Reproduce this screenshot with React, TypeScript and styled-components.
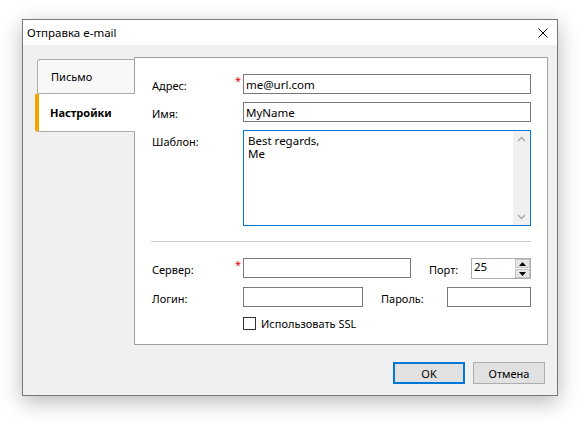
import styled, { createGlobalStyle } from "styled-components";

const GlobalStyle = createGlobalStyle`
  html, body {
    margin: 0;
    background: #fff;
  }
  body {
    min-height: 434px;
    font-family: "Noto Sans", "Open Sans", sans-serif;
    font-size: 11px;
    color: #000;
  }
`;

const ChevronIcon = ({ up }: { up?: boolean }) => (
  <svg width="17" height="17" viewBox="0 0 17 17">
    <polyline
      points={up ? "5,10 8.5,6.5 12,10" : "5,7 8.5,10.5 12,7"}
      fill="none"
      stroke="#a6a6a6"
      strokeWidth="1.4"
    />
  </svg>
);

const Triangle = ({ up }: { up?: boolean }) => (
  <svg width="7" height="4" viewBox="0 0 7 4">
    <polygon points={up ? "0,4 3.5,0 7,4" : "0,0 3.5,4 7,0"} fill="#000" />
  </svg>
);

const App = () => {
  return (
    <>
      <GlobalStyle />
      <Dialog>
        <TitleBar>
          <Title>Отправка e-mail</Title>
          <CloseButton>
            <svg width="10" height="10" viewBox="0 0 10 10">
              <path d="M0.5 0.5 L9.5 9.5 M9.5 0.5 L0.5 9.5" stroke="#000" strokeWidth="1" />
            </svg>
          </CloseButton>
        </TitleBar>

        <DialogBody>
          <Main>
            <TabList>
              <Tab>Письмо</Tab>
              <Tab $active>Настройки</Tab>
            </TabList>

            <Panel>
              <FormGrid>
                <Label>Адрес:</Label>
                <Required>*</Required>
                <Input readOnly value="me@url.com" />

                <Label>Имя:</Label>
                <span />
                <Input readOnly value="MyName" />

                <Label>Шаблон:</Label>
                <span />
                <TextArea>
                  <TextBody>{"Best regards,\nMe"}</TextBody>
                  <ScrollBar>
                    <ChevronIcon up />
                    <ChevronIcon />
                  </ScrollBar>
                </TextArea>
              </FormGrid>

              <Separator />

              <Row>
                <RowLabel>Сервер:</RowLabel>
                <RowRequired>*</RowRequired>
                <Input readOnly value="" $width={168} />
                <SideLabel>Порт:</SideLabel>
                <SpinBox>
                  <SpinValue>25</SpinValue>
                  <SpinButtons>
                    <SpinButton>
                      <Triangle up />
                    </SpinButton>
                    <SpinButton>
                      <Triangle />
                    </SpinButton>
                  </SpinButtons>
                </SpinBox>
              </Row>

              <Row>
                <RowLabel>Логин:</RowLabel>
                <RowRequired />
                <Input readOnly value="" $width={120} />
                <SideLabel>Пароль:</SideLabel>
                <Input readOnly value="" $width={84} />
              </Row>

              <CheckRow>
                <CheckBox />
                <span>Использовать SSL</span>
              </CheckRow>
            </Panel>
          </Main>

          <Footer>
            <Button $primary>OK</Button>
            <Button>Отмена</Button>
          </Footer>
        </DialogBody>
      </Dialog>
    </>
  );
};

export default App;

const Dialog = styled.div`
  margin: 19px 0 0 22px;
  width: 536px;
  height: 377px;
  box-sizing: border-box;
  border: 1px solid #777;
  box-shadow: 0 6px 20px rgba(0, 0, 0, 0.28);
  display: flex;
  flex-direction: column;
  background: #f0f0f0;
`;

const TitleBar = styled.div`
  height: 25px;
  flex-shrink: 0;
  background: #fff;
  display: flex;
  align-items: center;
  justify-content: space-between;
  padding-left: 4px;
`;

const Title = styled.span`
  font-size: 11.5px;
`;

const CloseButton = styled.div`
  width: 10px;
  height: 10px;
  margin-right: 9px;
  display: flex;
`;

const DialogBody = styled.div`
  flex: 1;
  padding: 12px 9px 11px 12px;
  display: flex;
  flex-direction: column;
`;

const Main = styled.div`
  display: flex;
  height: 288px;
  flex-shrink: 0;
`;

const TabList = styled.div`
  width: 99px;
  padding-top: 2px;
  display: flex;
  flex-direction: column;
`;

const Tab = styled.div<{ $active?: boolean }>`
  box-sizing: border-box;
  display: flex;
  align-items: center;
  position: relative;
  border: 1px solid #adadad;
  border-right: none;
  ${({ $active }) =>
    $active
      ? `
    height: 39px;
    margin-right: -1px;
    z-index: 1;
    background: #fff;
    border-left: 4px solid #f5a300;
    border-radius: 3px 0 0 3px;
    padding-left: 11px;
    font-weight: bold;
  `
      : `
    height: 34px;
    margin-left: 2px;
    background: #f8f8f8;
    border-bottom: none;
    border-radius: 3px 0 0 0;
    padding-left: 13px;
  `}
`;

const Panel = styled.div`
  flex: 1;
  background: #fff;
  border: 1px solid #a0a0a0;
  padding: 16px 16px 16px 17px;
  display: flex;
  flex-direction: column;
`;

const FormGrid = styled.div`
  display: grid;
  grid-template-columns: 83px 8px 288px;
  align-items: start;
  row-gap: 8px;
`;

const Label = styled.div`
  height: 20px;
  line-height: 18px;
  padding-top: 3px;
  box-sizing: border-box;
`;

const Required = styled.div`
  color: #e00;
  font-size: 11px;
  line-height: 14px;
`;

const Input = styled.input<{ $width?: number }>`
  box-sizing: border-box;
  width: ${({ $width }) => ($width ? `${$width}px` : "100%")};
  height: 20px;
  border: 1px solid #7a7a7a;
  padding: 0 2px;
  margin: 0;
  font-family: inherit;
  font-size: 11.5px;
  color: #000;
  outline: none;
  background: #fff;
`;

const TextArea = styled.div`
  box-sizing: border-box;
  height: 96px;
  border: 1px solid #0078d7;
  display: flex;
`;

const TextBody = styled.div`
  flex: 1;
  white-space: pre;
  padding: 3px 4px;
  line-height: 13px;
  font-size: 11.5px;
`;

const ScrollBar = styled.div`
  width: 17px;
  background: #f0f0f0;
  display: flex;
  flex-direction: column;
  justify-content: space-between;
`;

const Separator = styled.div`
  height: 1px;
  flex-shrink: 0;
  background: #c8c8c8;
  margin: 15px 0 16px -1px;
`;

const Row = styled.div`
  display: flex;
  align-items: flex-start;
  margin-bottom: 8px;
  flex-shrink: 0;
`;

const RowLabel = styled(Label)`
  width: 83px;
`;

const RowRequired = styled(Required)`
  width: 8px;
`;

const SideLabel = styled(Label)`
  flex: 1;
  margin-left: 18px;
`;

const SpinBox = styled.div`
  box-sizing: border-box;
  width: 60px;
  height: 21px;
  border: 1px solid #adadad;
  display: flex;
`;

const SpinValue = styled.div`
  flex: 1;
  padding-left: 2px;
  line-height: 16px;
  font-size: 11.5px;
`;

const SpinButtons = styled.div`
  width: 15px;
  display: flex;
  flex-direction: column;
  gap: 1px;
`;

const SpinButton = styled.div`
  flex: 1;
  background: #e6e6e6;
  border: 1px solid #c4c4c4;
  display: flex;
  align-items: center;
  justify-content: center;
`;

const CheckRow = styled.div`
  display: flex;
  align-items: center;
  margin: 1px 0 0 91px;
  gap: 5px;
  flex-shrink: 0;
`;

const CheckBox = styled.span`
  box-sizing: border-box;
  width: 13px;
  height: 13px;
  border: 1px solid #333;
  background: #fff;
`;

const Footer = styled.div`
  display: flex;
  justify-content: flex-end;
  gap: 8px;
  margin-top: 17px;
  padding-right: 3px;
`;

const Button = styled.div<{ $primary?: boolean }>`
  box-sizing: border-box;
  width: 72px;
  height: 22px;
  display: flex;
  align-items: center;
  justify-content: center;
  background: #e1e1e1;
  border: ${({ $primary }) => ($primary ? "2px solid #0078d7" : "1px solid #adadad")};
`;
